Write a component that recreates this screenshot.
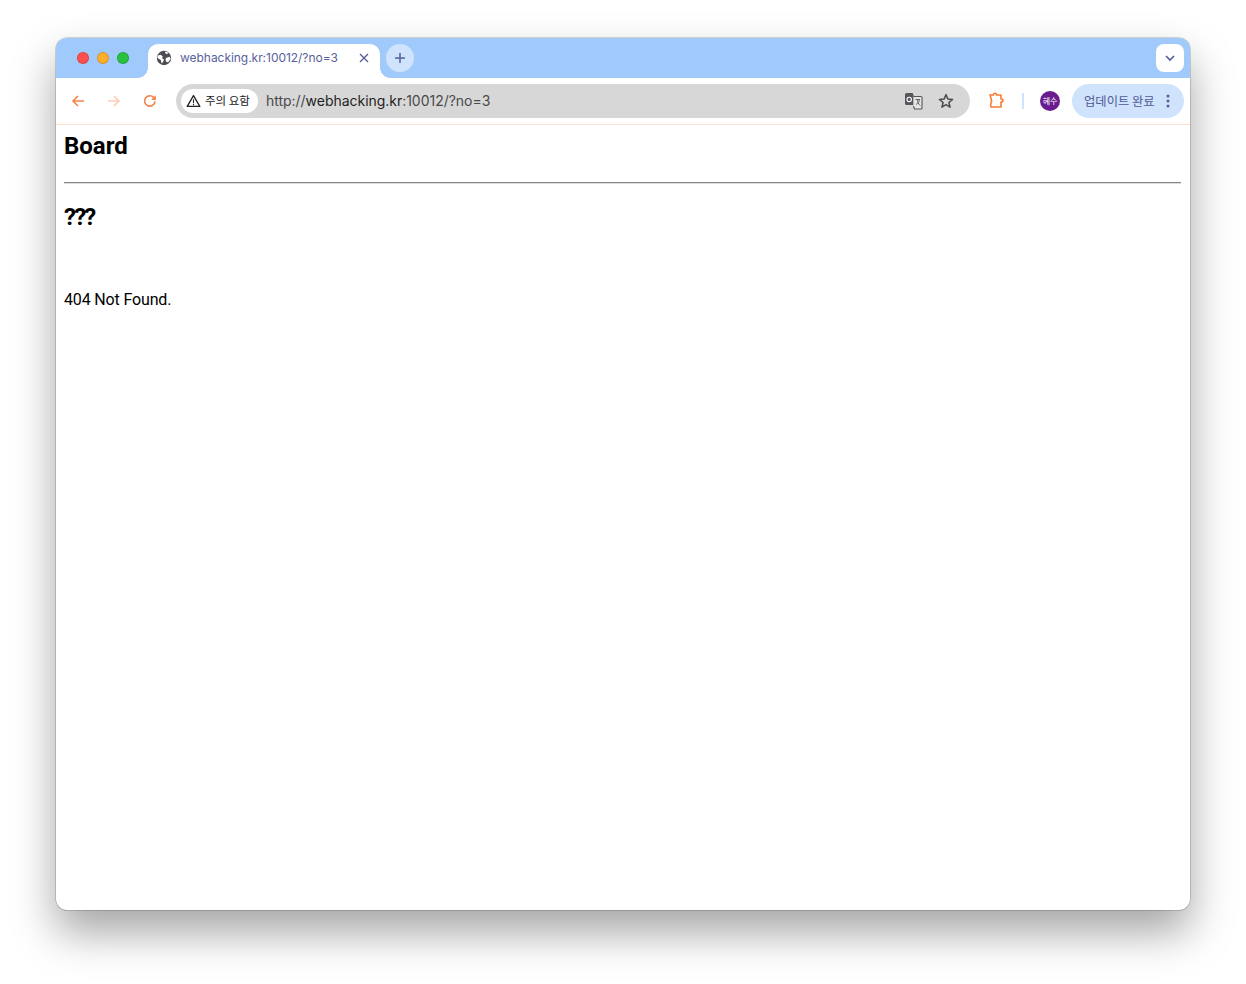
<div class="stage">
    <div class="window">
        <div class="tabstrip">
            <div class="lights">
                <span class="light red"></span>
                <span class="light amber"></span>
                <span class="light green"></span>
            </div>
            <div class="tab">
                <svg class="globe" width="16" height="16" viewBox="0 0 16 16">
                    <circle cx="8" cy="8" r="7.2" fill="#4b4d52" />
                    <path d="M1.8 5.4 4.600 4.800l2.200 1.600-.8 1.800L8 9.600 7 12l-1.400 1.400-.8-3.400L1.400 8z" fill="#fff" />
                    <path d="M9.400 1.400 9 3l2 1.200 1.400-1.400zM10 8l3.400-1.200 1.400 2-2.400 3.200-1.600.2L9.400 10z" fill="#fff" />
                </svg>
                <span class="tab-title">webhacking.kr:10012/?no=3</span>
                <svg class="tab-close" width="10" height="10" viewBox="0 0 10 10">
                    <path d="M1 1l8 8M9 1l-8 8" stroke="#575f9c" stroke-width="1.4" fill="none" />
                </svg>
            </div>
            <button class="new-tab" aria-label="New tab">
                <svg width="12" height="12" viewBox="0 0 12 12">
                    <path d="M6 1v10M1 6h10" stroke="#575f9c" stroke-width="1.5" fill="none" />
                </svg>
            </button>
            <div class="strip-space"></div>
            <button class="tab-search" aria-label="Tab search">
                <svg width="10" height="7" viewBox="0 0 10 7">
                    <path d="M1 1l4 4 4-4" stroke="#575f9c" stroke-width="1.7" fill="none" />
                </svg>
            </button>
        </div>

        <div class="toolbar">
            <div class="nav">
                <svg width="16" height="16" viewBox="0 0 16 16">
                    <path d="M14 8H3M8 3 3 8l5 5" stroke="#f6834a" stroke-width="1.6" fill="none" />
                </svg>
                <svg width="16" height="16" viewBox="0 0 16 16">
                    <path d="M2 8h11M8 3l5 5-5 5" stroke="#fbcdb6" stroke-width="1.6" fill="none" />
                </svg>
                <svg width="16" height="16" viewBox="0 0 16 16">
                    <path d="M13 8.400A5.200 5.200 0 1 1 11.600 4.400L13 6" stroke="#f6834a" stroke-width="1.7" fill="none" />
                    <path d="M13.800 2.200v4.800H9z" fill="#f6834a" />
                </svg>
            </div>
            <div class="omnibox">
                <div class="chip">
                    <svg width="15" height="14" viewBox="0 0 15 14">
                        <path d="M7.500 1.600 1.200 12.400h12.600z" stroke="#202124" stroke-width="1.3" fill="none" stroke-linejoin="round" />
                        <path d="M7.500 5.200v4M7.500 10v1.200" stroke="#202124" stroke-width="1.1" fill="none" />
                    </svg>
                    <span>주의 요함</span>
                </div>
                <span class="url"><span class="url-dim">http://</span>webhacking.kr<span class="url-dim">:10012/?no=3</span></span>
                <div class="omni-icons">
                    <svg width="18" height="18" viewBox="0 0 18 18">
                        <path d="M0 2.500A1.500 1.500 0 0 1 1.500 1h6.200l1 2.800V13H1.500A1.500 1.500 0 0 1 0 11.500z" fill="#55575b" />
                        <path d="M8.500 4.500h7.500a1 1 0 0 1 1 1V16a1 1 0 0 1-1 1H9.500l-1-3" fill="#e6e6e6" stroke="#55575b" stroke-width="1.1" />
                        <circle cx="4.200" cy="7.400" r="2.200" fill="none" stroke="#fff" stroke-width="1.1" />
                        <path d="M10.500 7.500h4.500M12.500 7.500c0 2.500 1 4.500 2.800 6M14.500 7.500c-.3 2-1.500 4-3.500 5" stroke="#55575b" stroke-width=".9" fill="none" />
                    </svg>
                    <svg width="16" height="16" viewBox="0 0 16 16">
                        <path d="M8 1.600 9.800 6l4.800.4-3.700 3.100 1.200 4.700L8 11.700l-4.100 2.500 1.200-4.700L1.400 6.400 6.200 6z" stroke="#4a4c50" stroke-width="1.5" fill="none" stroke-linejoin="round" />
                    </svg>
                </div>
            </div>
            <div class="actions">
                <svg class="puzzle" width="17" height="17" viewBox="0 0 17 17">
                    <path d="M2 3h3.500c0-2.400 3-2.400 3 0H13v4c2.600 0 2.600 3 0 3v5H3c-.6-1.600-.6-2.400 0-4 .8-1.400.8-3 0-4.500z" stroke="#f87b2f" stroke-width="1.6" fill="none" stroke-linejoin="round" />
                </svg>
                <span class="divider"></span>
                <span class="avatar">혜수</span>
                <div class="update">
                    <span>업데이트 완료</span>
                    <svg width="4" height="14" viewBox="0 0 4 14">
                        <circle cx="2" cy="2" r="1.5" fill="#575f9c" />
                        <circle cx="2" cy="7" r="1.5" fill="#575f9c" />
                        <circle cx="2" cy="12" r="1.5" fill="#575f9c" />
                    </svg>
                </div>
            </div>
        </div>

        <main class="page">
            <h2>Board</h2>
            <hr />
            <h3>???</h3>
            <p>404 Not Found.</p>
        </main>
    </div>
</div>

<style>
    :global(body) {
        background: #fff;
    }
    .stage {
        width: 1246px;
        height: 984px;
        box-sizing: border-box;
        padding: 38px 56px 74px;
        font-family: "Noto Sans CJK KR", "Noto Sans", sans-serif;
        overflow: hidden;
    }
    .window {
        height: 100%;
        display: flex;
        flex-direction: column;
        border-radius: 11px;
        background: #fff;
        box-shadow: 0 0 0 .5px rgba(0, 0, 0, .3), 0 22px 44px rgba(0, 0, 0, .36);
    }
    .tabstrip {
        height: 40px;
        flex: none;
        display: flex;
        align-items: flex-end;
        background: #9fcafb;
        border-radius: 11px 11px 0 0;
        padding: 0 6px 0 21px;
    }
    .lights {
        display: flex;
        gap: 8px;
        align-self: center;
        width: 71px;
    }
    .light {
        width: 12px;
        height: 12px;
        border-radius: 50%;
        box-sizing: border-box;
        border: .5px solid rgba(0, 0, 0, .15);
    }
    .red { background: #ff4f4d; }
    .amber { background: #fdae2c; }
    .green { background: #28c240; }
    .tab {
        position: relative;
        width: 232px;
        height: 34px;
        box-sizing: border-box;
        padding: 0 11px 6px 8px;
        display: flex;
        align-items: center;
        background: #fff;
        border-radius: 10px 10px 0 0;
    }
    .tab::before,
    .tab::after {
        content: "";
        position: absolute;
        bottom: 0;
        width: 10px;
        height: 10px;
    }
    .tab::before {
        left: -10px;
        background: radial-gradient(circle at 0 0, transparent 9.5px, #fff 10px);
    }
    .tab::after {
        right: -10px;
        background: radial-gradient(circle at 100% 0, transparent 9.5px, #fff 10px);
    }
    .globe {
        flex: none;
    }
    .tab-title {
        margin-left: 8px;
        margin-top: -2px;
        flex: 1;
        font-family: Inter, "Liberation Sans", sans-serif;
        font-size: 12px;
        letter-spacing: -.04px;
        color: #575f9c;
        white-space: nowrap;
    }
    .tab-close {
        flex: none;
    }
    .new-tab {
        width: 28px;
        height: 28px;
        margin: 0 0 6px 6px;
        padding: 0;
        border: none;
        border-radius: 50%;
        background: #cfe3fd;
        display: flex;
        align-items: center;
        justify-content: center;
    }
    .strip-space {
        flex: 1;
    }
    .tab-search {
        width: 28px;
        height: 28px;
        margin-bottom: 6px;
        padding: 0;
        border: none;
        border-radius: 8px;
        background: #fff;
        display: flex;
        align-items: center;
        justify-content: center;
    }
    .toolbar {
        position: relative;
        height: 47px;
        flex: none;
        box-sizing: border-box;
        display: flex;
        align-items: center;
        padding: 0 6px 1px 14px;
        background: #fff;
        border-bottom: 1px solid #fde0cd;
        border-radius: 11px 8px 0 0;
    }
    .nav {
        display: flex;
        flex: none;
        gap: 20px;
        width: 106px;
    }
    .omnibox {
        width: 794px;
        flex: none;
        height: 34px;
        box-sizing: border-box;
        padding: 0 16px 0 5px;
        display: flex;
        align-items: center;
        background: #d7d7d7;
        border-radius: 17px;
    }
    .chip {
        height: 24px;
        width: 77px;
        box-sizing: border-box;
        padding-left: 5px;
        display: flex;
        align-items: center;
        gap: 4px;
        background: #fff;
        border-radius: 12px;
        font-size: 11.5px;
        color: #202124;
        white-space: nowrap;
    }
    .chip span {
        margin-top: -2px;
    }
    .url {
        margin-left: 8px;
        flex: 1;
        font-family: Inter, "Liberation Sans", sans-serif;
        font-size: 14px;
        letter-spacing: -.03px;
        color: #1f1f1f;
    }
    .url-dim {
        color: #4a4a4a;
    }
    .omni-icons {
        display: flex;
        align-items: center;
        gap: 15px;
    }
    .actions {
        flex: 1;
        display: flex;
        align-items: center;
        justify-content: flex-end;
    }
    .puzzle {
        flex: none;
    }
    .divider {
        width: 2px;
        height: 16px;
        margin-left: 17px;
        background: #cfe3fd;
    }
    .avatar {
        width: 20px;
        height: 20px;
        margin-left: 16px;
        border-radius: 50%;
        background: #6a1b8e;
        color: #fff;
        font-size: 8px;
        line-height: 20px;
        text-align: center;
        white-space: nowrap;
        overflow: hidden;
    }
    .update {
        width: 112px;
        height: 34px;
        margin-left: 12px;
        box-sizing: border-box;
        padding: 0 14px 0 12px;
        display: flex;
        align-items: center;
        justify-content: space-between;
        background: #cfe3fd;
        border-radius: 17px;
        color: #4f5a94;
        font-size: 12.3px;
        white-space: nowrap;
    }
    .page {
        flex: 1;
        padding: 8px 9px 8px 8px;
        color: #000;
        font-family: Roboto, "Noto Sans", sans-serif;
    }
    h2 {
        margin: 0;
        font-size: 24px;
        line-height: 26px;
        font-weight: 700;
    }
    hr {
        margin: 23px 0 0;
        border: none;
        border-top: 1px solid #888;
        border-bottom: 1px solid #ddd;
    }
    h3 {
        margin: 19px 0 0;
        font-size: 24px;
        line-height: 28px;
        font-weight: 700;
        letter-spacing: -1.8px;
    }
    p {
        margin: 58px 0 0;
        font-size: 16px;
        line-height: 22px;
        letter-spacing: -.15px;
    }
</style>
